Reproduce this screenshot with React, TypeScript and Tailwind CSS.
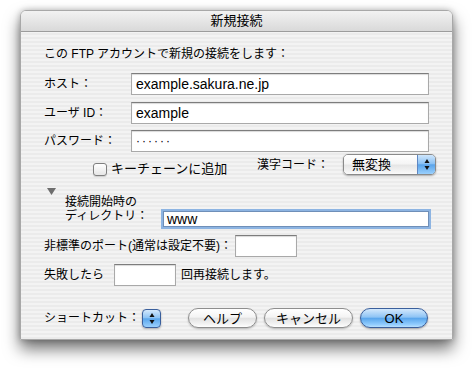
import React from "react";

const ui = "font-[family-name:'Liberation_Sans','Noto_Sans_CJK_JP',sans-serif]";

function TextField({ value, className = "" }: { value?: React.ReactNode; className?: string }) {
  return (
    <div
      className={`flex h-[22px] shrink-0 items-center border border-[#a9a9a9] border-t-[#7d7d7d] bg-white pl-[4px] text-[14px] text-black shadow-[inset_0_1px_1px_rgba(0,0,0,0.15)] ${className}`}
    >
      {value}
    </div>
  );
}

function Arrows() {
  return (
    <svg width="8" height="13" viewBox="0 0 8 13">
      <path d="M4 1 L6.5 5 L1.5 5 Z" fill="#111" />
      <path d="M4 12 L6.5 8 L1.5 8 Z" fill="#111" />
    </svg>
  );
}

function PillButton({ label, primary, className = "" }: { label: string; primary?: boolean; className?: string }) {
  return (
    <button
      type="button"
      className={`flex h-[20px] shrink-0 items-center justify-center rounded-full border text-[13px] leading-none ${
        primary
          ? "border-[#3a5f9c] bg-[linear-gradient(to_bottom,#d3e8fc_0%,#8ec4f5_45%,#5aa6ec_52%,#8fcbfd_85%,#b8e0ff_100%)] shadow-[0_1px_2px_rgba(0,0,0,0.35)]"
          : "border-[#8e8e8e] bg-[linear-gradient(to_bottom,#ffffff_0%,#f4f4f4_45%,#e2e2e2_52%,#f4f4f4_85%,#ffffff_100%)] shadow-[0_1px_2px_rgba(0,0,0,0.25)]"
      } ${className}`}
    >
      {label}
    </button>
  );
}

export default function App() {
  return (
    <div className={`h-[371px] w-[476px] bg-white pl-[20px] pt-[10px] text-black ${ui}`}>
      <div className="flex h-[330px] w-[433px] flex-col overflow-hidden rounded-t-[6px] border border-[#a8a8a8] bg-[repeating-linear-gradient(to_bottom,#f3f3f3_0px,#f3f3f3_2px,#ebebeb_2px,#ebebeb_4px)] shadow-[0_9px_16px_rgba(0,0,0,0.55),0_0_6px_rgba(0,0,0,0.25)]">
        <div className="flex h-[21px] shrink-0 items-center justify-center border-b border-[#9c9c9c] bg-[linear-gradient(to_bottom,#f2f2f2,#d9d9d9)] text-[13px]">
          新規接続
        </div>

        <div className="flex flex-col whitespace-nowrap px-[23px] pt-[14px] text-[12px]">
          <p className="leading-[16px]">この FTP アカウントで新規の接続をします：</p>

          <div className="mt-[11px] flex items-center">
            <span className="w-[87px] shrink-0">ホスト：</span>
            <TextField value="example.sakura.ne.jp" className="flex-1" />
          </div>
          <div className="mt-[7px] flex items-center">
            <span className="w-[87px] shrink-0">ユーザ ID：</span>
            <TextField value="example" className="flex-1" />
          </div>
          <div className="mt-[6px] flex items-center">
            <span className="w-[87px] shrink-0">パスワード：</span>
            <TextField
              value={<span className="text-[12px] tracking-[2px]">······</span>}
              className="flex-1"
            />
          </div>

          <div className="mt-[2px] flex h-[21px] items-start">
            <div className="ml-[49px] mt-[8px] flex h-[14px] items-center">
              <span className="h-[13px] w-[14px] rounded-[3px] border border-[#7f7f7f] bg-[linear-gradient(to_bottom,#ffffff,#e6e6e6)] shadow-[0_1px_1px_rgba(0,0,0,0.15)]" />
              <span className="ml-[4px] text-[13px] leading-[14px]">キーチェーンに追加</span>
            </div>
            <div className="-mr-[7px] ml-auto flex items-center">
              <span className="mr-[14px]">漢字コード：</span>
              <div className="flex h-[21px] w-[93px] overflow-hidden rounded-[5px] border border-[#8a8a8a] shadow-[0_1px_2px_rgba(0,0,0,0.3)]">
                <div className="flex flex-1 items-center bg-[linear-gradient(to_bottom,#ffffff_0%,#f5f5f5_45%,#e6e6e6_55%,#fafafa_100%)] pl-[8px] text-[13px]">
                  無変換
                </div>
                <div className="flex w-[18px] items-center justify-center border-l border-[#5f87c2] bg-[linear-gradient(to_bottom,#cfe6fc_0%,#8cc2f4_45%,#5aa4ea_52%,#9ad0fd_100%)]">
                  <Arrows />
                </div>
              </div>
            </div>
          </div>

          <svg className="ml-[3px] mt-[13px] shrink-0" width="9" height="7" viewBox="0 0 9 7">
            <path d="M0 0 L9 0 L4.5 7 Z" fill="#6e6e6e" />
          </svg>

          <div className="flex items-start">
            <p className="ml-[21px] w-[98px] shrink-0 leading-[14px]">
              接続開始時の
              <br />
              ディレクトリ：
            </p>
            <div className="mt-[16px] flex h-[16px] flex-1 items-center border border-[#6f8fb8] bg-white pl-[3px] text-[14px] shadow-[0_0_0_2px_#8db4e2]">
              www
            </div>
          </div>

          <div className="mt-[8px] flex items-center">
            <span>非標準のポート(通常は設定不要)：</span>
            <TextField className="ml-[3px] h-[21px] w-[62px]" />
          </div>

          <div className="mt-[7px] flex items-center">
            <span>失敗したら</span>
            <TextField className="ml-[10px] w-[62px]" />
            <span className="ml-[5px]">回再接続します。</span>
          </div>

          <div className="mt-[22px] flex items-center">
            <span className="shrink-0">ショートカット：</span>
            <div className="ml-[2px] flex h-[19px] w-[19px] shrink-0 items-center justify-center rounded-[4px] border border-[#3a5f9c] bg-[linear-gradient(to_bottom,#d3e8fc_0%,#8ec4f5_45%,#5aa6ec_52%,#9ad0fd_100%)] shadow-[0_1px_2px_rgba(0,0,0,0.3)]">
              <Arrows />
            </div>
            <PillButton label="ヘルプ" className="ml-[27px] w-[69px]" />
            <PillButton label="キャンセル" className="ml-[7px] w-[89px]" />
            <PillButton label="OK" primary className="ml-[7px] w-[68px]" />
          </div>
        </div>
      </div>
    </div>
  );
}
